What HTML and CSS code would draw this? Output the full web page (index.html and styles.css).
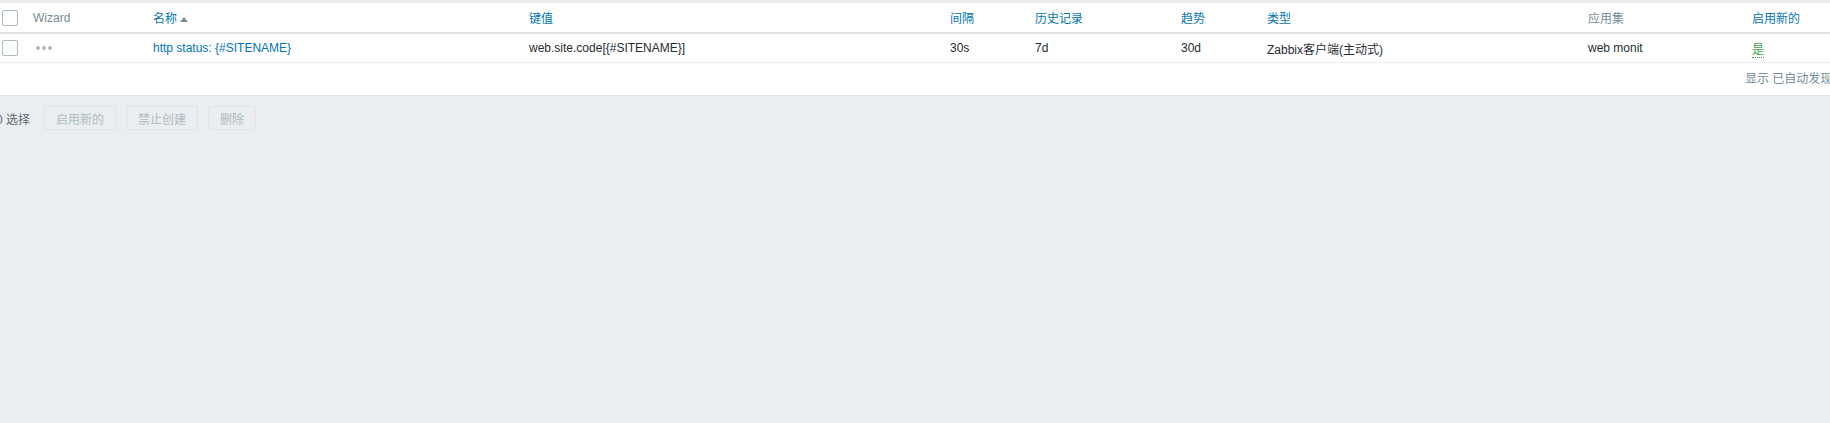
FILE: index.html
```html
<!DOCTYPE html>
<html lang="zh-CN">
<head>
<meta charset="utf-8">
<title>Discovery items</title>
<link rel="stylesheet" href="styles.css">
</head>
<body>
<div class="page">
  <div class="list-box">
    <table class="list-table">
      <colgroup>
        <col class="c-check">
        <col class="c-wizard">
        <col class="c-name">
        <col class="c-key">
        <col class="c-interval">
        <col class="c-history">
        <col class="c-trends">
        <col class="c-type">
        <col class="c-app">
        <col class="c-status">
      </colgroup>
      <thead>
        <tr>
          <th><span class="checkbox"></span></th>
          <th class="plain">Wizard</th>
          <th><a class="sort">名称</a><span class="arrow-up"></span></th>
          <th><a class="sort">键值</a></th>
          <th><a class="sort">间隔</a></th>
          <th><a class="sort">历史记录</a></th>
          <th><a class="sort">趋势</a></th>
          <th><a class="sort">类型</a></th>
          <th class="plain">应用集</th>
          <th><a class="sort">启用新的</a></th>
        </tr>
      </thead>
      <tbody>
        <tr>
          <td><span class="checkbox"></span></td>
          <td><span class="wizard-dots"><i></i><i></i><i></i></span></td>
          <td><a class="link">http status: {#SITENAME}</a></td>
          <td>web.site.code[{#SITENAME}]</td>
          <td>30s</td>
          <td>7d</td>
          <td>30d</td>
          <td>Zabbix客户端(主动式)</td>
          <td>web monit</td>
          <td><a class="status-on">是</a></td>
        </tr>
      </tbody>
    </table>
    <div class="table-stats">显示 已自动发现的 1中的1</div>
  </div>
  <div class="action-bar">
    <span class="selected-count">0 选择</span>
    <button class="btn" disabled>启用新的</button>
    <button class="btn" disabled>禁止创建</button>
    <button class="btn" disabled>删除</button>
  </div>
</div>
</body>
</html>
```
FILE: styles.css
```css
html, body {
  margin: 0;
  padding: 0;
}
body {
  background: #ebeef0;
  font-family: "Liberation Sans", Arial, "Noto Sans CJK SC", sans-serif;
  font-size: 12px;
  color: #1f2c33;
  overflow: hidden;
  width: 1830px;
  height: 423px;
}
.page {
  padding-top: 3px;
}
.list-box {
  background: #fff;
  width: 1893px;
  margin-left: -3px;
  border-bottom: 1px solid #dfe4e7;
}
.list-table {
  border-collapse: collapse;
  table-layout: fixed;
  width: 100%;
}
.c-check { width: 31px; }
.c-wizard { width: 120px; }
.c-name { width: 376px; }
.c-key { width: 421px; }
.c-interval { width: 85px; }
.c-history { width: 146px; }
.c-trends { width: 86px; }
.c-type { width: 321px; }
.c-app { width: 164px; }
.c-status { width: auto; }

.list-table th {
  height: 29px;
  padding: 0 5px;
  text-align: left;
  font-weight: normal;
  white-space: nowrap;
  border-bottom: 2px solid #dfe4e7;
  vertical-align: middle;
}
.list-table td {
  height: 28px;
  padding: 0 5px;
  white-space: nowrap;
  border-bottom: 1px solid #ebeef0;
  vertical-align: middle;
}
.list-table th.plain {
  color: #768d99;
}
.sort {
  color: #0275b8;
}
.link {
  color: #0275b8;
}
.arrow-up {
  display: inline-block;
  width: 0;
  height: 0;
  margin-left: 3px;
  border-left: 4px solid transparent;
  border-right: 4px solid transparent;
  border-bottom: 5px solid #768d99;
  vertical-align: 1px;
}
.checkbox {
  display: block;
  width: 14px;
  height: 14px;
  border: 1px solid #acbbc2;
  border-radius: 2px;
  background: #fff;
}
.wizard-dots {
  display: flex;
  gap: 2px;
  padding-left: 3px;
}
.wizard-dots i {
  display: block;
  width: 4px;
  height: 4px;
  border-radius: 50%;
  background: #acbbc2;
}
.status-on {
  color: #429e47;
  border-bottom: 1px dotted #429e47;
}
.table-stats {
  height: 32px;
  line-height: 32px;
  text-align: right;
  padding-right: 5px;
  color: #768d99;
}
.action-bar {
  display: flex;
  align-items: center;
  margin-left: -4px;
  padding-top: 10px;
}
.selected-count {
  color: #5c6b73;
  margin-right: 14px;
}
.btn {
  height: 24px;
  padding: 0 11px;
  margin-right: 10px;
  font-family: inherit;
  font-size: 12px;
  color: #acbbc2;
  background: #ebeef0;
  border: 1px solid #dfe4e7;
  border-radius: 2px;
}
```
